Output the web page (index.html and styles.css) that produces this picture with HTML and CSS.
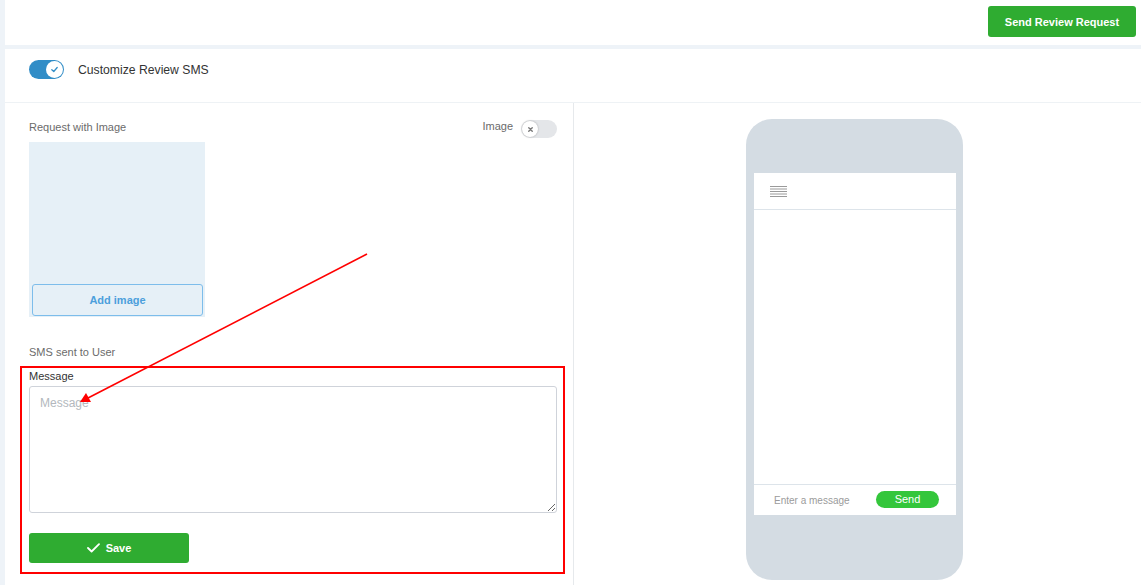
FILE: index.html
```html
<!DOCTYPE html>
<html lang="en">
<head>
  <meta charset="UTF-8">
  <meta name="viewport" content="width=device-width, initial-scale=1.0">
  <title>Customize Review SMS</title>
  <link rel="stylesheet" href="styles.css">
</head>
<body>

  <div class="page">
    <header class="topbar">
      <button class="btn-green btn-request">Send Review Request</button>
    </header>

    <section class="panel">
      <div class="panel-head">
        <span class="switch on"><span class="knob">
          <svg width="9" height="9" viewBox="0 0 10 10"><path d="M2 5.2 L4.2 7.2 L8 2.8" fill="none" stroke="#318dc7" stroke-width="1.4" stroke-linecap="round" stroke-linejoin="round"/></svg>
        </span></span>
        <span class="head-title">Customize Review SMS</span>
      </div>

      <div class="panel-body">
        <div class="form-col">
          <div class="row-between">
            <span class="label-gray">Request with Image</span>
            <span class="image-toggle">
              <span class="label-gray">Image</span>
              <span class="switch off"><span class="knob">
                <svg width="7" height="7" viewBox="0 0 8 8"><path d="M2 2 L6 6 M6 2 L2 6" stroke="#777" stroke-width="1.6" stroke-linecap="round"/></svg>
              </span></span>
            </span>
          </div>

          <div class="image-box">
            <button class="btn-add">Add image</button>
          </div>

          <div class="label-gray sms-label">SMS sent to User</div>

          <div class="highlight">
            <label class="field-label" for="msg">Message</label>
            <textarea id="msg" class="message" placeholder="Message"></textarea>
            <button class="btn-green btn-save">
              <svg width="13" height="10" viewBox="0 0 13 10"><path d="M1 5 L4.6 8.5 L12 1.2" fill="none" stroke="#fff" stroke-width="1.8" stroke-linecap="round" stroke-linejoin="round"/></svg>
              Save
            </button>
          </div>
        </div>

        <div class="preview-col">
          <div class="phone">
            <div class="screen">
              <div class="screen-head">
                <svg width="17" height="11" viewBox="0 0 17 11"><path d="M0 0.5 H17 M0 3 H17 M0 5.5 H17 M0 8 H17 M0 10.5 H17" stroke="#9a9a9a" stroke-width="1"/></svg>
              </div>
              <div class="screen-body"></div>
              <div class="screen-foot">
                <span class="enter-msg">Enter a message</span>
                <span class="btn-send">Send</span>
              </div>
            </div>
          </div>
        </div>
      </div>
    </section>
  </div>

  <svg class="annotation" width="1141" height="585" viewBox="0 0 1141 585">
    <line x1="367" y1="254" x2="88" y2="398" stroke="#ff0000" stroke-width="1.6"/>
    <path d="M80 402 L86 393 L91 402 Z" fill="#ff0000"/>
  </svg>

</body>
</html>
```

FILE: styles.css
```css
/* General Reset */
body, html {
  margin: 0;
  padding: 0;
  font-family: "Liberation Sans", Arial, sans-serif;
  box-sizing: border-box;
}

body {
  background-color: #eef3f8;
  height: 585px;
  overflow: hidden;
  position: relative;
}

.page {
  margin-left: 5px;
}

/* Top bar */
.topbar {
  background: #fff;
  height: 45px;
  display: flex;
  justify-content: flex-end;
  align-items: flex-start;
  padding: 6px 5px 0 0;
  box-sizing: border-box;
  margin-bottom: 4px;
}

.btn-green {
  background-color: #2fac31;
  color: #fff;
  border: none;
  border-radius: 3px;
  font-family: inherit;
  font-weight: bold;
  cursor: pointer;
}

.btn-request {
  width: 148px;
  height: 31px;
  font-size: 11px;
  padding: 0;
}

/* Panel */
.panel {
  background: #fff;
  height: 536px;
}

.panel-head {
  height: 54px;
  border-bottom: 1px solid #eef2f5;
  display: flex;
  align-items: center;
  padding-left: 24px;
  box-sizing: border-box;
  padding-bottom: 12px;
}

.head-title {
  font-size: 12.2px;
  color: #333;
  margin-left: 14px;
}

.switch {
  display: inline-flex;
  align-items: center;
  border-radius: 10px;
  box-sizing: border-box;
}

.switch.on {
  width: 35px;
  height: 19px;
  background: #318dc7;
  justify-content: flex-end;
  padding-right: 1px;
}

.switch.off {
  width: 36px;
  height: 18px;
  background: #e4e6e9;
  justify-content: flex-start;
  padding-left: 1px;
}

.knob {
  width: 17px;
  height: 17px;
  border-radius: 50%;
  background: #fff;
  display: flex;
  align-items: center;
  justify-content: center;
}

.switch.off .knob {
  width: 16px;
  height: 16px;
  box-shadow: 0 0 2px rgba(0, 0, 0, 0.3);
}

.panel-body {
  display: flex;
}

/* Form column */
.form-col {
  width: 528px;
  padding: 17px 16px 0 24px;
  border-right: 1px solid #e6e9ec;
  height: 482px;
}

.row-between {
  display: flex;
  justify-content: space-between;
  align-items: center;
  height: 18px;
}

.image-toggle {
  display: flex;
  align-items: center;
  gap: 8px;
}

.image-toggle .label-gray {
  margin-top: -6px;
}

.row-between > .label-gray {
  margin-top: -4px;
}

.label-gray {
  font-size: 11px;
  color: #6b6b6b;
}

.image-box {
  width: 176px;
  height: 175px;
  margin-top: 4px;
  background: #e6f0f7;
  display: flex;
  align-items: flex-end;
  padding: 0 2px 1px 3px;
  box-sizing: border-box;
}

.btn-add {
  width: 100%;
  height: 32px;
  background: #e6f0f7;
  border: 1px solid #7dbdeb;
  border-radius: 3px;
  color: #4c9fdc;
  font-family: inherit;
  font-size: 11px;
  font-weight: bold;
  cursor: pointer;
}

.sms-label {
  margin-top: 29px;
}

/* Annotated field */
.highlight {
  border: 2px solid #ff0000;
  margin: 8px -8px 0 -9px;
  padding: 2px 6px 9px 7px;
  display: flex;
  flex-direction: column;
  align-items: flex-start;
}

.field-label {
  font-size: 11px;
  color: #333;
  line-height: 13px;
}

.message {
  width: 100%;
  height: 127px;
  margin-top: 3px;
  border: 1px solid #cfd3da;
  border-radius: 3px;
  padding: 9px 10px;
  box-sizing: border-box;
  font-family: inherit;
  font-size: 12px;
  resize: vertical;
}

.message::placeholder {
  color: #b3b8bd;
}

.btn-save {
  margin-top: 20px;
  width: 160px;
  height: 30px;
  font-size: 11px;
  display: flex;
  align-items: center;
  justify-content: center;
  gap: 6px;
}

/* Phone preview */
.preview-col {
  flex: 1;
  padding: 16px 0 0 172px;
}

.phone {
  width: 217px;
  height: 461px;
  background: #d4dce3;
  border-radius: 26px;
  padding: 54px 7px 0 8px;
  box-sizing: border-box;
}

.screen {
  background: #fff;
  height: 342px;
  display: flex;
  flex-direction: column;
}

.screen-head {
  height: 37px;
  border-bottom: 1px solid #dde4ea;
  display: flex;
  align-items: center;
  padding-left: 16px;
  padding-top: 1px;
  box-sizing: border-box;
}

.screen-body {
  flex: 1;
}

.screen-foot {
  height: 30px;
  border-top: 1px solid #dde4ea;
  display: flex;
  align-items: center;
  justify-content: space-between;
  padding: 0 17px 0 20px;
}

.enter-msg {
  font-size: 10px;
  color: #9b9b9b;
  margin-top: 1px;
}

.btn-send {
  width: 63px;
  height: 17px;
  background: #34c63b;
  border-radius: 9px;
  color: #fff;
  font-size: 11px;
  display: flex;
  align-items: center;
  justify-content: center;
  margin-top: -2px;
}

/* Annotation arrow overlay */
.annotation {
  position: absolute;
  top: 0;
  left: 0;
  pointer-events: none;
}
```
